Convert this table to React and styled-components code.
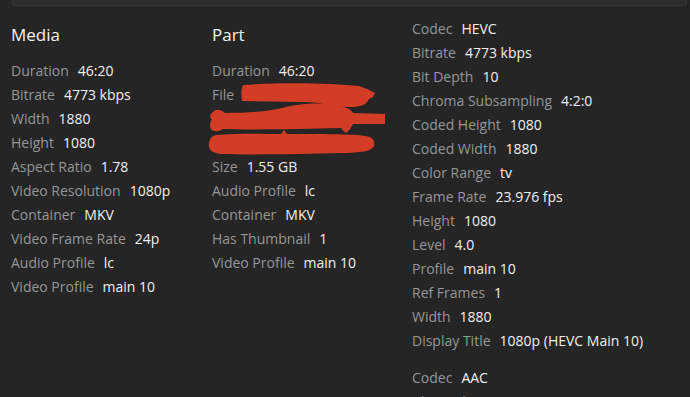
import React from 'react';
import styled, { createGlobalStyle } from 'styled-components';

const GlobalStyle = createGlobalStyle`
  html, body {
    margin: 0;
    padding: 0;
    overflow: hidden;
    background: #252525;
  }
  body {
    font-family: "Open Sans", "Liberation Sans", sans-serif;
    -webkit-font-smoothing: antialiased;
  }
`;

const Page = styled.div`
  width: 690px;
  height: 397px;
  overflow: hidden;
  background: #252525;
`;

const TopPanel = styled.div`
  height: 5px;
  margin: 0 3px 0 12px;
  background: #2c2c2c;
  border: 1px solid #353535;
  border-top: none;
  border-radius: 0 0 3px 3px;
`;

const Columns = styled.div`
  display: grid;
  grid-template-columns: 201px 200px 1fr;
  padding: 10px 0 0 11px;
`;

const Column = styled.div`
  display: flex;
  flex-direction: column;
  position: relative;
  padding-top: ${(p) => p.$offset || 0}px;
`;

const Heading = styled.h2`
  margin: 7px 0 12px;
  font-size: 17px;
  font-weight: 500;
  line-height: 24px;
  color: #f2f2f2;
`;

const Section = styled.div`
  display: flex;
  flex-direction: column;
  & + & {
    margin-top: 13px;
  }
`;

const Row = styled.div`
  display: flex;
  align-items: baseline;
  gap: 9px;
  height: ${(p) => (p.$lines || 1) * 24}px;
  font-size: 14px;
  line-height: 24px;
  white-space: nowrap;
`;

const Label = styled.span`
  color: #979797;
`;

const Value = styled.span`
  color: #f0f0f0;
`;

// red marker strokes covering the file path
const Scribble = styled.svg`
  position: absolute;
  left: -11px;
  top: 64px;
  width: 200px;
  height: 80px;
  pointer-events: none;
`;

const media = [
  ['Duration', '46:20'],
  ['Bitrate', '4773 kbps'],
  ['Width', '1880'],
  ['Height', '1080'],
  ['Aspect Ratio', '1.78'],
  ['Video Resolution', '1080p'],
  ['Container', 'MKV'],
  ['Video Frame Rate', '24p'],
  ['Audio Profile', 'lc'],
  ['Video Profile', 'main 10'],
];

const part = [
  ['Duration', '46:20'],
  ['File', '', 3],
  ['Size', '1.55 GB'],
  ['Audio Profile', 'lc'],
  ['Container', 'MKV'],
  ['Has Thumbnail', '1'],
  ['Video Profile', 'main 10'],
];

const videoStream = [
  ['Codec', 'HEVC'],
  ['Bitrate', '4773 kbps'],
  ['Bit Depth', '10'],
  ['Chroma Subsampling', '4:2:0'],
  ['Coded Height', '1080'],
  ['Coded Width', '1880'],
  ['Color Range', 'tv'],
  ['Frame Rate', '23.976 fps'],
  ['Height', '1080'],
  ['Level', '4.0'],
  ['Profile', 'main 10'],
  ['Ref Frames', '1'],
  ['Width', '1880'],
  ['Display Title', '1080p (HEVC Main 10)'],
];

const audioStream = [
  ['Codec', 'AAC'],
  ['Channels', '2'],
];

const Rows = ({ items }) =>
  items.map(([label, value, lines]) => (
    <Row key={label} $lines={lines}>
      <Label>{label}</Label>
      {value && <Value>{value}</Value>}
    </Row>
  ));

export default function App() {
  return (
    <Page>
      <GlobalStyle />
      <TopPanel />
      <Columns>
        <Column>
          <Heading>Media</Heading>
          <Rows items={media} />
        </Column>
        <Column>
          <Heading>Part</Heading>
          <Rows items={part} />
          <Scribble viewBox="0 0 200 80">
            <g fill="#d33d25">
              <path d="M42 5 C80 2 130 3 158 6 L166 9 L174 13 L172 17 L168 19 C165 25 160 27 150 27 L125 26 C122 23 115 22 100 22 L41 21 C40 15 40 9 42 5 Z" />
              <path d="M12 32 C15 28 21 30 24 33 C50 33 70 31 85 27 C100 23 125 22 140 26 C148 28 151 31 152 33 L184 34 L184 44 L152 44 C150 48 148 51 145 53 C142 51 141 49 140 48 C100 49 50 50 22 49 C18 52 12 52 10 49 C8 46 9 42 11 40 C8 37 9 34 12 32 Z" />
              <path d="M15 55 C40 53 65 54 80 54 L83 50 L86 54 C120 54 150 54 165 56 C172 57 174 61 173 66 C171 71 160 73 140 73 C100 74 50 75 20 74 C10 73 7 69 8 63 C9 58 11 56 15 55 Z" />
            </g>
          </Scribble>
        </Column>
        <Column $offset={1}>
          <Section>
            <Rows items={videoStream} />
          </Section>
          <Section>
            <Rows items={audioStream} />
          </Section>
        </Column>
      </Columns>
    </Page>
  );
}
